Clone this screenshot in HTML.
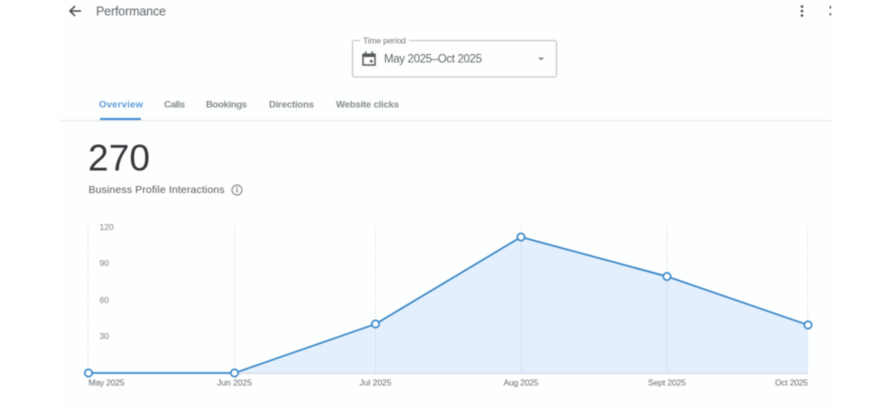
<!DOCTYPE html>
<html><head><meta charset="utf-8"><style>
html,body{margin:0;padding:0;background:#fff}
body{width:891px;height:407px;overflow:hidden;position:relative}
svg{position:absolute;left:0;top:0;filter:blur(.45px)}
text{font-family:"Liberation Sans",sans-serif}
</style></head><body>
<svg width="891" height="407" viewBox="0 0 891 407">
<rect x="61" y="0" width="770" height="407" fill="#fdfefe"/>
<path d="M81 11H70.500M75 6L70 11L75 16" fill="none" stroke="#444" stroke-width="1.500"/>
<text x="96" y="15.500" font-size="12.500" fill="#5f6368" textLength="70">Performance</text>
<g fill="#444"><circle cx="802" cy="6.500" r="1.300"/><circle cx="802" cy="11" r="1.300"/><circle cx="802" cy="15.500" r="1.300"/></g>
<rect x="829.700" y="6" width="1.300" height="2.500" fill="#444"/><rect x="829.700" y="13" width="1.300" height="2.500" fill="#444"/>

<path d="M360 40.500H354.500A2 2 0 0 0 352.500 42.500V75A2 2 0 0 0 354.500 77H554.500A2 2 0 0 0 556.500 75V42.500A2 2 0 0 0 554.500 40.500H409" fill="none" stroke="#bdbfc1" stroke-width="1.100"/>
<text x="363" y="43.500" font-size="8.500" fill="#75787c" textLength="43">Time period</text>
<path d="M363 54.500H375V65H363Z" fill="none" stroke="#55585b" stroke-width="1.500"/>
<path d="M362.500 53.500H375.500V57H362.500ZM365 51.500H366.500V54H365ZM371.500 51.500H373V54H371.500Z" fill="#55585b"/>
<rect x="370" y="60" width="2.500" height="2.500" fill="#55585b"/>
<text x="384" y="62.500" font-size="11.500" fill="#63676b" textLength="98">May 2025–Oct 2025</text>
<path d="M538 57.500H544L541 60.500Z" fill="#85888c"/>

<g font-size="9.500" font-weight="bold" fill="#85898e">
<text x="99" y="107.500" fill="#5b9bd5" textLength="44">Overview</text>
<text x="164" y="107.500" textLength="21">Calls</text>
<text x="206" y="107.500" textLength="41">Bookings</text>
<text x="269" y="107.500" textLength="45">Directions</text>
<text x="336" y="107.500" textLength="63">Website clicks</text>
</g>
<rect x="100" y="118" width="41" height="2" fill="#3c8dd0"/>
<rect x="61" y="120" width="770" height="1.200" fill="#e9eaeb"/>

<text x="88" y="170.500" font-size="37" fill="#34363a" textLength="62">270</text>
<text x="88.500" y="193" font-size="10.500" fill="#55585c" textLength="136">Business Profile Interactions</text>
<circle cx="237" cy="190" r="5" fill="none" stroke="#7a7d80" stroke-width="1"/>
<rect x="236.400" y="188.500" width="1.200" height="4" fill="#7a7d80"/><rect x="236.400" y="186.600" width="1.200" height="1.200" fill="#7a7d80"/>

<g stroke="#dcdfe2" stroke-width="1" stroke-dasharray="1.500 1.500">
<path d="M88 226V373M234.500 226V373M375.500 226V324M521.500 226V237M667 226V276M807.500 226V325"/>
</g>
<path d="M234.500 373L375.500 324L521 237L667 276.500L808 325V373Z" fill="#e3effd"/>
<path d="M375.500 324V373M521.500 237V373M667 276V373" stroke="#d4e2f2" stroke-width="1" fill="none"/>
<path d="M234 373.500H808" stroke="#d0d6dd" stroke-width="1"/>
<path d="M88 373H234.500L375.500 324L521 237L667 276.500L808 325" fill="none" stroke="#3484c6" stroke-width="1.700"/>
<g fill="#fff" stroke="#3484c6" stroke-width="1.600">
<circle cx="88.500" cy="373" r="3.700"/><circle cx="234.500" cy="373" r="3.700"/><circle cx="375.500" cy="324" r="3.700"/><circle cx="521" cy="237" r="3.700"/><circle cx="667" cy="276.500" r="3.700"/><circle cx="808" cy="325" r="3.700"/>
</g>
<g font-size="8.500" fill="#7a7d80">
<text x="99.500" y="230">120</text><text x="99.500" y="266">90</text><text x="99.500" y="303">60</text><text x="99.500" y="339">30</text>
</g>
<g font-size="8.500" fill="#66696d">
<text x="88.500" y="385.500" textLength="36">May 2025</text>
<text x="217" y="385.500" textLength="35">Jun 2025</text>
<text x="359.500" y="385.500" textLength="32">Jul 2025</text>
<text x="503.500" y="385.500" textLength="35">Aug 2025</text>
<text x="648" y="385.500" textLength="38">Sept 2025</text>
<text x="775" y="385.500" textLength="33">Oct 2025</text>
</g>
</svg>
</body></html>
